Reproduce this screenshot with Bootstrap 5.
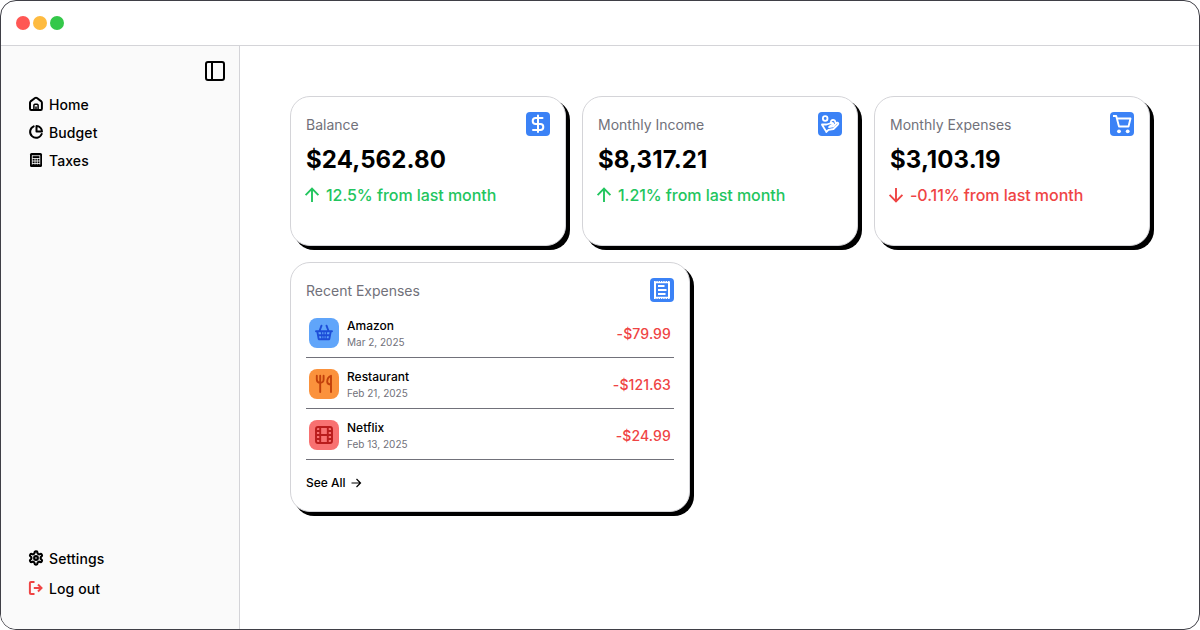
<!DOCTYPE html>
<html lang="en">
<head>
<meta charset="utf-8">
<meta name="viewport" content="width=device-width, initial-scale=1">
<title>Finance dashboard</title>
<link href="https://cdn.jsdelivr.net/npm/bootstrap@5.3.0/dist/css/bootstrap.min.css" rel="stylesheet">
<style>
body{font-family:Inter,sans-serif;color:#000;background:#fff;font-size:14px;line-height:20px}
svg{display:block;flex:none}
.window{height:630px;border:1px solid #3f3f46;border-radius:16px;overflow:hidden}
.titlebar{height:45px;border-bottom:1px solid #d4d4d8;padding:0 15px;gap:3px}
.dot{width:14px;height:14px;border-radius:50%}
.dot-close{background:#ff5754}.dot-min{background:#febb40}.dot-max{background:#34c84a}
.sidebar{width:239px;background:#fafafa;border-right:1px solid #d4d4d8;padding:13px 12px 30px 27px;font-weight:500;letter-spacing:.1px}
.sidebar a{color:#000;height:20px;gap:5px;text-decoration:none}
.main-nav{gap:8px;margin-top:12px}
.sidebar nav svg{margin-top:-2px}
.foot-nav{gap:10px}
.board{padding:50px;gap:16px}
.panel{border:1px solid #d4d4d8;border-radius:20px;background:#fff;box-shadow:4px 4px 0 #000;padding:15px}
.stat{width:276px;height:150px}
.recent{width:400px;height:250px}
.title{color:#71717a;padding-top:3px}
.tile{width:24px;height:24px;border-radius:4px;background:#3b82f6;color:#fff}
.amount{font-size:24px;line-height:32px;font-weight:700;margin-top:8px;letter-spacing:.1px}
.trend{font-size:16px;line-height:24px;font-weight:500;margin:7px 0 0 -4px;gap:4px;letter-spacing:-.05px}
.up{color:#22c55e}.down{color:#ef4444}
.expenses{margin-top:5px}
.expense{height:51px;border-bottom:1px solid #71717a;padding:2px 3px 0;gap:8px}
.expense .label,.expense .down{padding-top:2px}
.expense .down{font-weight:500;letter-spacing:.12px}
.thumb{width:30px;height:30px;border-radius:8px}
.shop{background:#60a5fa;color:#1d4ed8}.food{background:#fb923c;color:#c2410c}.film{background:#f87171;color:#b91c1c}
.name{font-size:12px;line-height:16px;font-weight:500}
.date{font-size:10px;line-height:16px;color:#71717a}
.see{font-size:12px;line-height:16px;font-weight:500;color:#000;text-decoration:none;margin-top:15px;gap:3px}
</style>
</head>
<body>
<div class="window d-flex flex-column">
  <header class="titlebar d-flex align-items-center flex-shrink-0">
    <span class="dot dot-close"></span><span class="dot dot-min"></span><span class="dot dot-max"></span>
  </header>
  <div class="d-flex flex-grow-1">
    <aside class="sidebar d-flex flex-column flex-shrink-0">
      <svg class="align-self-end" width="24" height="24" viewBox="0 0 24 24" fill="none" stroke="currentColor" stroke-width="2"><rect x="3" y="3" width="18" height="18" rx="2"/><path d="M9 3v18"/></svg>
      <nav class="main-nav d-flex flex-column">
        <a href="#" class="d-flex align-items-center"><svg width="16" height="16" viewBox="0 0 16 16" fill="none" stroke="currentColor" stroke-width="2" stroke-linejoin="round"><path d="M2 6.700Q2 6 2.600 5.400L7 2Q8 1.300 9 2l4.300 3.400q.6.6.6 1.300v5.800q0 1.500-1.200 1.500H3.200Q2 14 2 12.500Z"/><path d="M5.900 14V9.300q0-1 1-1h2.200q1 0 1 1V14M8 10.500V14" stroke-width="1.500"/></svg>Home</a>
        <a href="#" class="d-flex align-items-center"><svg width="16" height="16" viewBox="0 0 16 16" fill="none" stroke="currentColor" stroke-width="2" stroke-linejoin="round" stroke-linecap="round"><path d="M5.700 2.300A6 6 0 1 0 13.700 10M8.500 2v5.500H14A5.600 5.600 0 0 0 8.500 2Z"/></svg>Budget</a>
        <a href="#" class="d-flex align-items-center"><svg width="16" height="16" viewBox="0 0 16 16"><rect x="2" y="1" width="12" height="14" rx="1.500" fill="#000"/><path d="M4 3.700h8M4 6.500h8M4 9h8M4 11.500h8M4.300 3.500v9M7 6v6.500M9.300 6v6.500M11.800 3.500v9" stroke="#fafafa" stroke-width=".8"/></svg>Taxes</a>
      </nav>
      <nav class="foot-nav d-flex flex-column mt-auto">
        <a href="#" class="d-flex align-items-center"><svg width="16" height="16" viewBox="0 0 24 24" fill="none" stroke="currentColor" stroke-width="3.200" stroke-linejoin="round"><path d="M12.220 2h-.440a2 2 0 0 0-2 2v.180a2 2 0 0 1-1 1.730l-.430.250a2 2 0 0 1-2 0l-.150-.080a2 2 0 0 0-2.730.730l-.220.380a2 2 0 0 0 .730 2.730l.150.100a2 2 0 0 1 1 1.720v.510a2 2 0 0 1-1 1.740l-.150.090a2 2 0 0 0-.730 2.730l.220.380a2 2 0 0 0 2.730.730l.150-.080a2 2 0 0 1 2 0l.430.250a2 2 0 0 1 1 1.730V20a2 2 0 0 0 2 2h.440a2 2 0 0 0 2-2v-.180a2 2 0 0 1 1-1.730l.430-.250a2 2 0 0 1 2 0l.150.080a2 2 0 0 0 2.730-.730l.220-.390a2 2 0 0 0-.730-2.730l-.150-.080a2 2 0 0 1-1-1.740v-.500a2 2 0 0 1 1-1.740l.150-.090a2 2 0 0 0 .730-2.730l-.220-.380a2 2 0 0 0-2.730-.730l-.150.080a2 2 0 0 1-2 0l-.430-.250a2 2 0 0 1-1-1.730V4a2 2 0 0 0-2-2z"/><circle cx="12" cy="12" r="2.800"/></svg>Settings</a>
        <a href="#" class="d-flex align-items-center"><svg width="16" height="16" viewBox="0 0 16 16" fill="none" stroke="#ef4444" stroke-width="2"><path d="M6.500 2H3q-1.100 0-1.100 1.100v9.800Q1.900 14 3 14h3.500M5.800 8h8"/><path d="M10 4.500 13.500 8 10 11.500"/></svg>Log out</a>
      </nav>
    </aside>
    <main class="board d-flex flex-column flex-grow-1">
      <div class="d-flex gap-3">
        <section class="panel stat">
          <div class="d-flex justify-content-between"><div class="title">Balance</div><div class="tile"><svg width="24" height="24" viewBox="0 0 24 24" fill="none" stroke="currentColor" stroke-width="2" stroke-linecap="round"><path d="M12 3.500v16.500M16.500 6H9.700a3 3 0 0 0 0 6h4.600a3 3 0 0 1 0 6H7"/></svg></div></div>
          <div class="amount">$24,562.80</div>
          <div class="trend up d-flex align-items-center"><svg width="20" height="20" viewBox="0 0 20 20" fill="none" stroke="currentColor" stroke-width="1.900"><path d="M10 17V4M3.600 10.100 10 3.700l6.400 6.400"/></svg>12.5% from last month</div>
        </section>
        <section class="panel stat">
          <div class="d-flex justify-content-between"><div class="title">Monthly Income</div><div class="tile"><svg width="24" height="24" viewBox="0 0 24 24" fill="none" stroke="currentColor" stroke-width="1.800" stroke-linejoin="round" stroke-linecap="round"><circle cx="7.200" cy="6.500" r="2.300"/><path d="M13 11.200a2.300 2.300 0 1 1 4.400-.8M4 12.300l4.500.2L14 10.800q1.600.1 1 1.500L11.500 14.500M11 15.200l4.300-.8 3.300-3.600q1.200-.6 1.700.5.200.8-.6 1.600L15.500 17l-5 .8L8.200 20M4 12.800l4.200 6.700"/></svg></div></div>
          <div class="amount">$8,317.21</div>
          <div class="trend up d-flex align-items-center"><svg width="20" height="20" viewBox="0 0 20 20" fill="none" stroke="currentColor" stroke-width="1.900"><path d="M10 17V4M3.600 10.100 10 3.700l6.400 6.400"/></svg>1.21% from last month</div>
        </section>
        <section class="panel stat">
          <div class="d-flex justify-content-between"><div class="title">Monthly Expenses</div><div class="tile"><svg width="24" height="24" viewBox="0 0 24 24" fill="none" stroke="currentColor" stroke-width="1.900" stroke-linejoin="round"><path d="M3 4h3.200L9 14.500h9.500L20.500 6.500H7"/><circle cx="9" cy="19.300" r="1.900" fill="currentColor" stroke="none"/><circle cx="17.700" cy="19.300" r="1.900" fill="currentColor" stroke="none"/></svg></div></div>
          <div class="amount">$3,103.19</div>
          <div class="trend down d-flex align-items-center"><svg width="20" height="20" viewBox="0 0 20 20" fill="none" stroke="currentColor" stroke-width="1.900"><path d="M10 3v13M3.600 9.900l6.400 6.400 6.400-6.400"/></svg>-0.11% from last month</div>
        </section>
      </div>
      <section class="panel recent">
        <div class="d-flex justify-content-between"><div class="title">Recent Expenses</div><div class="tile"><svg width="24" height="24" viewBox="0 0 24 24" fill="none" stroke="currentColor"><path d="M5 3.500v17M19 3.500v17" stroke-width="2"/><path d="M4 3.600h16M4 20.400h16" stroke-width="1.200" stroke-dasharray="1.500 .8"/><path d="M4 4.700h16M4 19.300h16" stroke-width="1.200"/><path d="M8 8h6.500M8 12h8.500M8 16h7.500" stroke-width="2"/></svg></div></div>
        <div class="expenses">
          <div class="expense d-flex align-items-center">
            <div class="thumb shop"><svg width="30" height="30" viewBox="0 0 30 30" fill="none" stroke="currentColor" stroke-width="1.900" stroke-linecap="round" stroke-linejoin="round"><path d="M7 13.300h16M10.500 13l2-5.300M19.500 13l-2-5.300M8.300 13.500l1.400 7.700h10.600l1.400-7.700M9.300 17.300h11.400" /><path d="M12.500 14l.4 7M17.500 14l-.4 7M15 14v7" stroke-width="1.300"/></svg></div>
            <div class="label"><div class="name">Amazon</div><div class="date">Mar 2, 2025</div></div><div class="down ms-auto">-$79.99</div>
          </div>
          <div class="expense d-flex align-items-center">
            <div class="thumb food"><svg width="30" height="30" viewBox="0 0 30 30" fill="none" stroke="currentColor" stroke-width="1.900" stroke-linecap="round" stroke-linejoin="round"><path d="M7.800 6.800v3.700q0 3.200 3.400 3.200t3.400-3.200V6.800M11.200 6.800v16.200M22 23V6.800q-3.800 1.200-3.800 6 0 2.700 3.800 2.700"/></svg></div>
            <div class="label"><div class="name">Restaurant</div><div class="date">Feb 21, 2025</div></div><div class="down ms-auto">-$121.63</div>
          </div>
          <div class="expense d-flex align-items-center">
            <div class="thumb film"><svg width="30" height="30" viewBox="0 0 30 30" fill="none" stroke="currentColor" stroke-width="1.900"><rect x="7" y="7" width="16" height="16" rx="2"/><path d="M11.200 7v16M18.800 7v16M11.200 15h7.600M7 11h4M7 15h4M7 19h4M19 11h4M19 15h4M19 19h4"/></svg></div>
            <div class="label"><div class="name">Netflix</div><div class="date">Feb 13, 2025</div></div><div class="down ms-auto">-$24.99</div>
          </div>
        </div>
        <a href="#" class="see d-flex align-items-center">See All<svg width="14" height="14" viewBox="0 0 14 14" fill="none" stroke="currentColor" stroke-width="1.200"><path d="M2.500 7h9M7.500 3l4 4-4 4"/></svg></a>
      </section>
    </main>
  </div>
</div>
<script src="https://cdn.jsdelivr.net/npm/bootstrap@5.3.0/dist/js/bootstrap.bundle.min.js"></script>
</body>
</html>
